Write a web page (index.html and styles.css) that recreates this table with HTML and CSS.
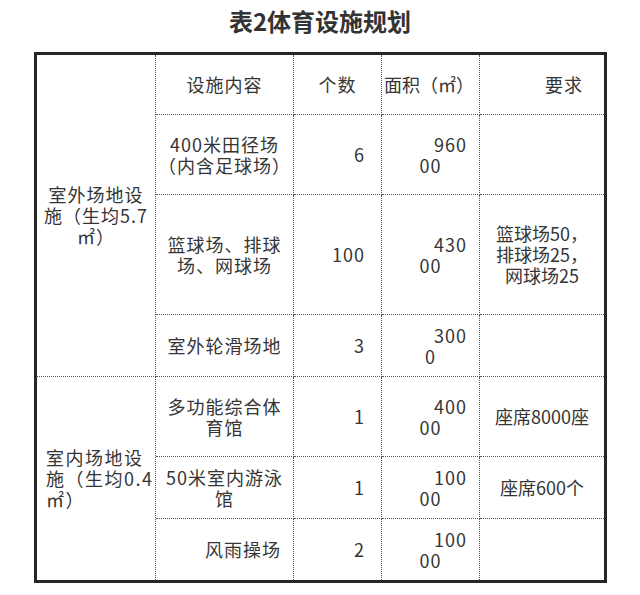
FILE: index.html
```html
<!DOCTYPE html>
<html lang="zh-CN">
<head>
<meta charset="utf-8">
<title>表2体育设施规划</title>
<link rel="stylesheet" href="styles.css">
</head>
<body>
<h1 class="title">表2体育设施规划</h1>
<table class="plan">
  <colgroup>
    <col class="c-group">
    <col class="c-name">
    <col class="c-count">
    <col class="c-area">
    <col class="c-req">
  </colgroup>
  <tbody>
    <tr class="r-head">
      <td class="group group-out" rowspan="4">室外场地设<br>施（生均5.7<br>㎡）</td>
      <td class="name">设施内容</td>
      <td class="count-head">个数</td>
      <td class="area-head">面积（㎡）</td>
      <td class="req-head last">要求</td>
    </tr>
    <tr class="r-80">
      <td class="name">400米田径场<br>（内含足球场）</td>
      <td class="count">6</td>
      <td class="area"><span class="a1">960</span><span class="a2">00</span></td>
      <td class="req last"></td>
    </tr>
    <tr class="r-120">
      <td class="name">篮球场、排球<br>场、网球场</td>
      <td class="count">100</td>
      <td class="area"><span class="a1">430</span><span class="a2">00</span></td>
      <td class="req last">篮球场50，<br>排球场25，<br>网球场25</td>
    </tr>
    <tr class="r-62">
      <td class="name">室外轮滑场地</td>
      <td class="count">3</td>
      <td class="area"><span class="a1">300</span><span class="a2">0</span></td>
      <td class="req last"></td>
    </tr>
    <tr class="r-80">
      <td class="group group-in bottom" rowspan="3">室内场地设<br>施（生均0.4<br>㎡）</td>
      <td class="name">多功能综合体<br>育馆</td>
      <td class="count">1</td>
      <td class="area"><span class="a1">400</span><span class="a2">00</span></td>
      <td class="req last">座席8000座</td>
    </tr>
    <tr class="r-62">
      <td class="name">50米室内游泳<br>馆</td>
      <td class="count">1</td>
      <td class="area"><span class="a1">100</span><span class="a2">00</span></td>
      <td class="req last">座席600个</td>
    </tr>
    <tr class="r-61">
      <td class="name name-right bottom">风雨操场</td>
      <td class="count bottom">2</td>
      <td class="area bottom"><span class="a1">100</span><span class="a2">00</span></td>
      <td class="req last bottom"></td>
    </tr>
  </tbody>
</table>
</body>
</html>
```
FILE: styles.css
```css
html, body {
  margin: 0;
  padding: 0;
  background: #ffffff;
}

body {
  font-family: "Noto Sans CJK SC", "Noto Sans", sans-serif;
  color: #353535;
}

.title {
  margin: 0;
  padding-top: 9px;
  height: 43px;
  font-size: 24px;
  line-height: 24px;
  font-weight: bold;
  text-align: center;
  color: #333333;
}

.plan {
  margin-left: 34px;
  width: 573px;
  table-layout: fixed;
  border-collapse: separate;
  border-spacing: 0;
  border: 3px solid #262626;
  font-size: 18px;
  line-height: 21px;
  letter-spacing: 1px;
}

.c-group { width: 119px; }
.c-name  { width: 138px; }
.c-count { width: 88px; }
.c-area  { width: 98px; }
.c-req   { width: 124px; }

.plan td {
  padding: 0;
  vertical-align: middle;
  border-right: 1px dotted #555555;
  border-bottom: 1px dotted #555555;
  white-space: nowrap;
}

.plan td.last { border-right: none; }
.plan td.bottom { border-bottom: none; }

.r-head { height: 60px; }
.r-80 { height: 80px; }
.r-120 { height: 120px; }
.r-62 { height: 62px; }
.r-61 { height: 61px; }

.plan td.group-out {
  text-align: center;
  padding-top: 0;
}

.plan td.group-in {
  text-align: left;
  padding-left: 9px;
  letter-spacing: 1.5px;
}

.plan td.name {
  text-align: center;
}

.plan td.name-right {
  text-align: right;
  padding-right: 12px;
}

.plan td.count-head {
  text-align: center;
}

.plan td.area-head {
  text-align: left;
  padding-left: 2px;
  letter-spacing: 0;
}

.plan td.req-head {
  text-align: left;
  padding-left: 65px;
}

.plan td.count {
  text-align: right;
  padding-right: 16px;
}

.plan td.area .a1 {
  display: block;
  text-align: right;
  padding-right: 12px;
}

.plan td.area .a2 {
  display: block;
  text-align: center;
}

.plan td.req {
  text-align: center;
  letter-spacing: 0;
}
```
